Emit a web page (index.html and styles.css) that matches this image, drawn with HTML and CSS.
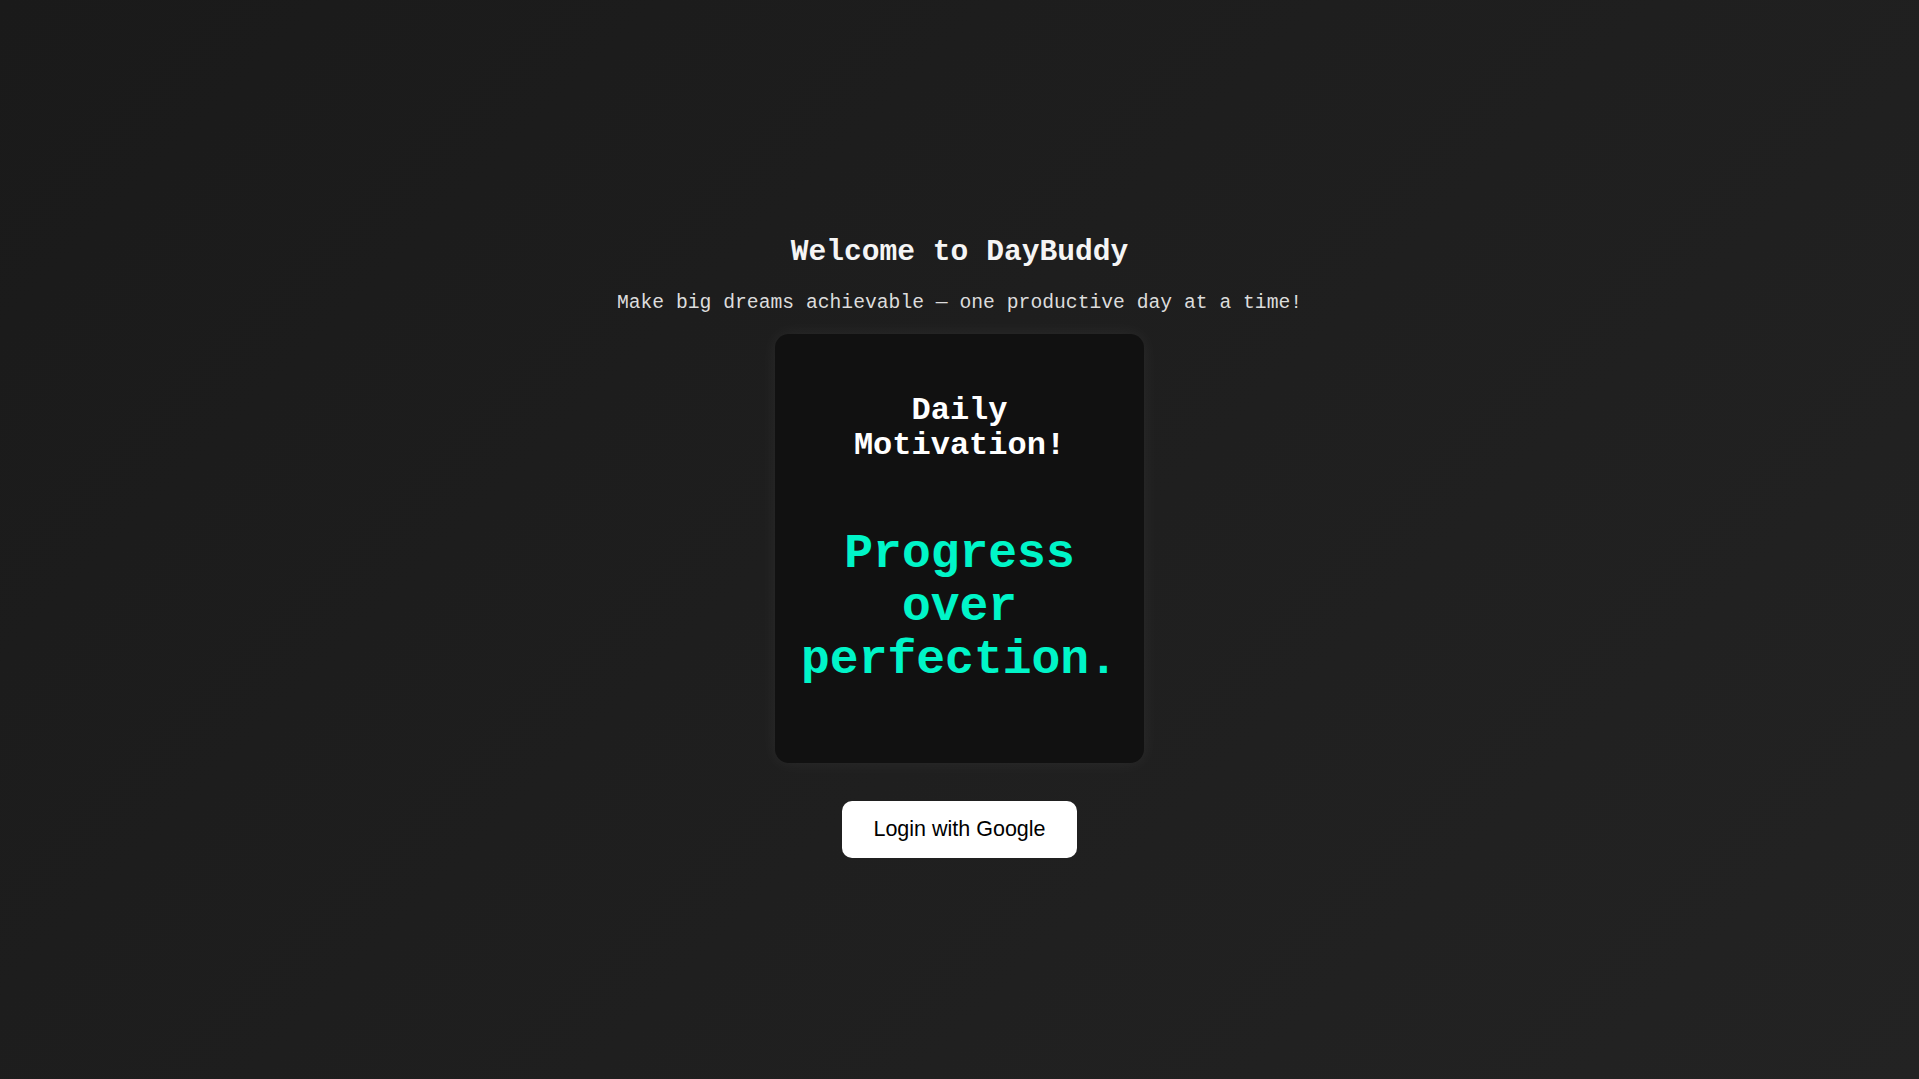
FILE: index.html
```html
<!DOCTYPE html>
<html lang="en">
<head>
<meta charset="utf-8">
<title>DayBuddy</title>
<link rel="stylesheet" href="styles.css">
</head>
<body>
  <main class="page">
    <h1 class="title">Welcome to DayBuddy</h1>
    <p class="tagline">Make big dreams achievable — one productive day at a time!</p>
    <section class="card">
      <h2 class="card-title">Daily Motivation!</h2>
      <p class="quote">Progress over perfection.</p>
    </section>
    <button class="login-btn" type="button">Login with Google</button>
  </main>
</body>
</html>
```

FILE: styles.css
```css
html, body {
  margin: 0;
  padding: 0;
}

body {
  min-height: 100vh;
  background: linear-gradient(135deg, #1a1a1a 0%, #232323 100%);
  color: #f2f2f2;
  font-family: "Courier New", Courier, "Liberation Mono", monospace;
}

.page {
  min-height: 100vh;
  display: flex;
  flex-direction: column;
  align-items: center;
  justify-content: center;
  text-align: center;
  box-sizing: border-box;
  padding-top: 14px;
}

.title {
  margin: 0 0 23px;
  font-size: 29.6px;
  font-weight: bold;
  color: #f5f5f5;
}

.tagline {
  margin: 0 0 20px;
  font-size: 19.7px;
  color: #dcdcdc;
}

.card {
  width: 321px;
  padding: 33px 24px 28px;
  background: #111111;
  border-radius: 14px;
  box-shadow: 0 0 18px rgba(255, 255, 255, 0.06);
}

.card-title {
  margin: 26px 0 0;
  font-size: 32px;
  line-height: 35px;
  font-weight: bold;
  color: #ffffff;
}

.quote {
  margin: 65.5px 0 48px;
  font-size: 48px;
  line-height: 53px;
  font-weight: bold;
  color: #00f5c8;
}

.login-btn {
  margin-top: 38px;
  padding: 16px 31px;
  border: none;
  border-radius: 10px;
  background: #ffffff;
  color: #000000;
  font-family: "Liberation Sans", Arial, sans-serif;
  font-size: 21.5px;
  cursor: pointer;
}
```
